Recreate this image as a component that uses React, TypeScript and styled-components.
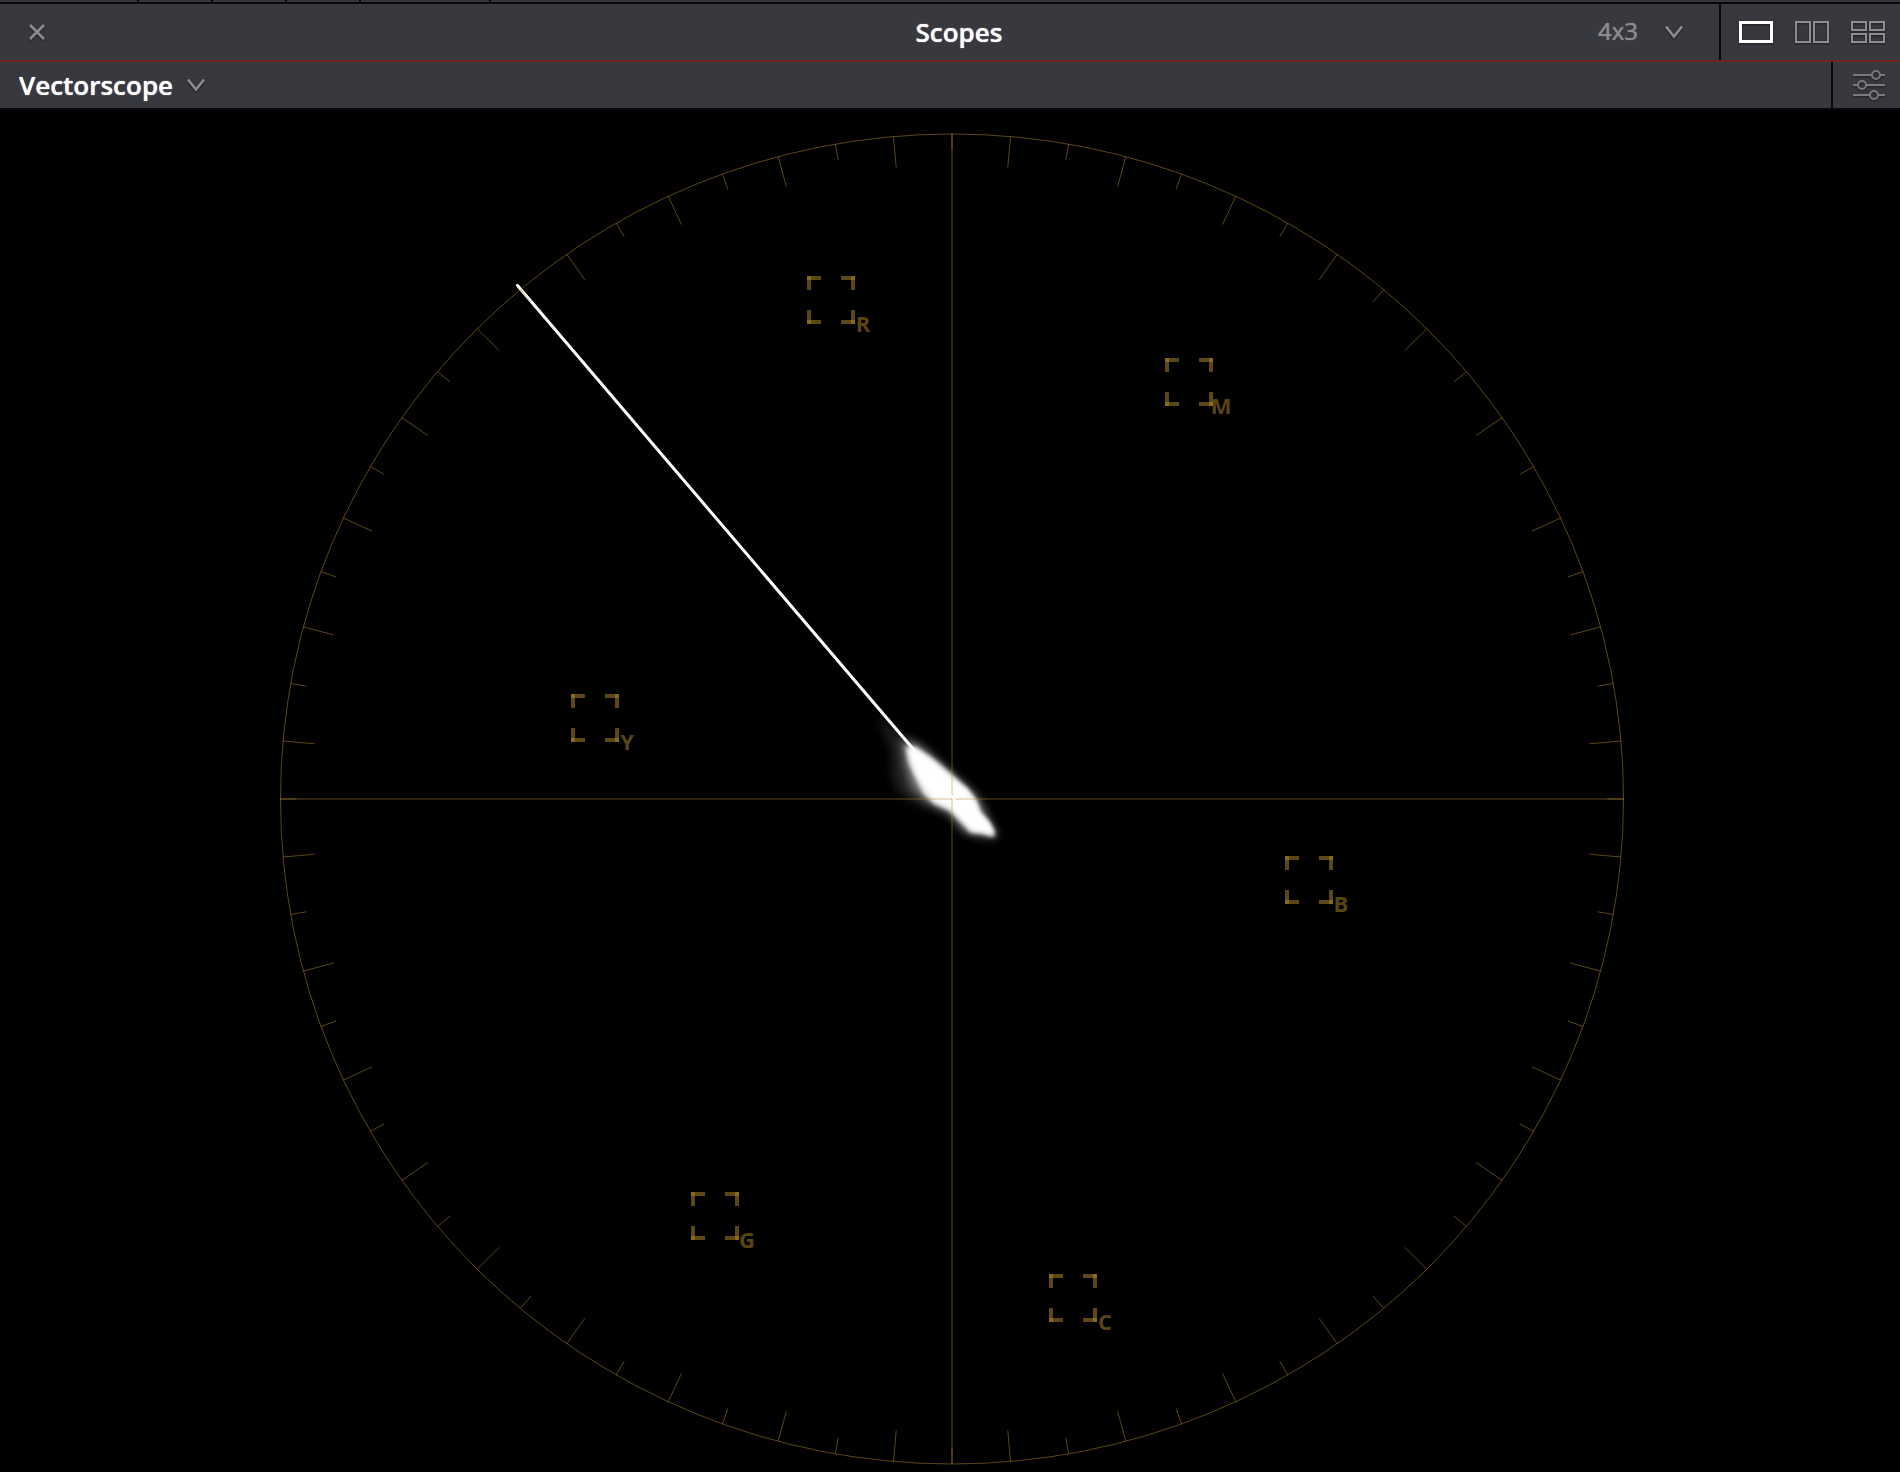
import React from "react";
import styled, { createGlobalStyle } from "styled-components";

const GlobalStyle = createGlobalStyle`
  *, *::before, *::after { box-sizing: border-box; }
  html { background: #000; }
  body {
    margin: 0;
    background: #000;
    font-family: "Open Sans", "Noto Sans", sans-serif;
    color: #fff;
  }
`;

const GOLD = "#b1882a";
const EDGE = "#08090c";
const PANEL = "#38393e";
const MUTED = "#8e8d8e";

const Page = styled.main`
  min-height: 100vh;
  display: flex;
  flex-direction: column;
  background: #000;
`;

const TabEdge = styled.div`
  display: grid;
  grid-template-columns: 137px 72px 72px 72px 128px 1fr;
  column-gap: 2px;
  height: 4px;
  background: ${EDGE};
  border-bottom: 2px solid ${EDGE};
`;

const TabStub = styled.span`
  background: #34353c;
`;

const Header = styled.header`
  display: grid;
  grid-template-columns: 1fr auto 1fr;
  height: 58px;
  background: ${PANEL};
  border-bottom: 2px solid #702723;
`;

const Side = styled.div<{ $end?: boolean }>`
  display: flex;
  align-items: stretch;
  justify-content: ${(p) => (p.$end ? "flex-end" : "flex-start")};
`;

const Title = styled.h1`
  margin: 0;
  padding-left: 18px;
  align-self: center;
  font-size: 26px;
  line-height: 36px;
  font-weight: 600;
  text-shadow: 0 0 1px currentColor;
`;

const SubBar = styled.div`
  display: flex;
  justify-content: space-between;
  height: 48px;
  background: ${PANEL};
  border-bottom: 2px solid ${EDGE};
`;

const IconButton = styled.button<{ $dim?: boolean }>`
  display: flex;
  align-items: center;
  padding: 0;
  border: 0;
  background: none;
  color: ${(p) => (p.$dim ? "#7a7a7b" : MUTED)};
  cursor: pointer;
  svg {
    display: block;
    filter: drop-shadow(0 1px 1px rgba(0, 0, 0, 0.5));
  }
  &[aria-pressed="true"] { color: #fff; }
`;

const CloseButton = styled(IconButton)`
  padding: 0 28px;
`;

const ButtonGroup = styled.div`
  display: flex;
  gap: 22px;
  padding: 0 15px 0 18px;
  border-left: 2px solid ${EDGE};
`;

const Picker = styled.label<{ $quiet?: boolean }>`
  display: flex;
  align-items: center;
  gap: ${(p) => (p.$quiet ? "25px" : "12px")};
  padding: ${(p) => (p.$quiet ? "0 35px 0 0" : "0 0 0 19px")};
  color: ${MUTED};
  svg {
    display: block;
    pointer-events: none;
    filter: drop-shadow(0 1px 1px rgba(0, 0, 0, 0.5));
  }
`;

const Select = styled.select<{ $quiet?: boolean }>`
  appearance: none;
  margin: 0;
  padding: ${(p) => (p.$quiet ? "0 0 2px" : "0")};
  border: 0;
  background: transparent;
  font-family: inherit;
  font-size: ${(p) => (p.$quiet ? "24px" : "26px")};
  line-height: 36px;
  font-weight: ${(p) => (p.$quiet ? 400 : 600)};
  color: ${(p) => (p.$quiet ? MUTED : "#fff")};
  text-shadow: 0 0 1px currentColor;
  cursor: pointer;
`;

const Plot = styled.svg`
  display: block;
  width: 100%;
  height: auto;
`;

const TargetLabel = styled.text`
  font-size: 22px;
  font-weight: 700;
  text-anchor: middle;
  fill: ${GOLD};
  fill-opacity: 0.52;
`;

const Chevron = () => (
  <svg width="20" height="14" viewBox="0 0 20 14" fill="none" stroke="currentColor" strokeWidth="2.6" aria-hidden="true">
    <path d="M2 1.5L10 11.5L18 1.5" />
  </svg>
);

const CX = 952;
const CY = 689;
const RX = 671.5;
const RY = 665;

const ticks = Array.from({ length: 72 }, (_, i) => {
  const a = (i * 5 * Math.PI) / 180;
  const inner = i % 2 ? 0.953 : 0.976;
  const c = Math.cos(a);
  const s = Math.sin(a);
  return { x1: CX + RX * c, y1: CY + RY * s, x2: CX + RX * inner * c, y2: CY + RY * inner * s };
});

const targets = [
  { name: "R", x: 807, y: 166 },
  { name: "M", x: 1165, y: 248 },
  { name: "Y", x: 571, y: 584 },
  { name: "B", x: 1285, y: 746 },
  { name: "G", x: 691, y: 1082 },
  { name: "C", x: 1049, y: 1164 },
];

const HORIZONTAL_LEGS = "M0 2H14M34 2H48M0 46H14M34 46H48";
const VERTICAL_LEGS = "M2 0V14M46 0V14M2 34V48M46 34V48";

const Target = ({ name, x, y }: { name: string; x: number; y: number }) => (
  <g>
    <g transform={`translate(${x} ${y})`} fill="none" stroke={GOLD} strokeOpacity="0.52" strokeWidth="4">
      <path d={HORIZONTAL_LEGS} />
      <path d={VERTICAL_LEGS} />
    </g>
    <TargetLabel x={x + 56} y={y + 56}>{name}</TargetLabel>
  </g>
);

const Vectorscope = () => (
  <Plot viewBox="0 0 1900 1362" role="img" aria-label="Vectorscope">
    <defs>
      <filter id="core" x="-20%" y="-20%" width="140%" height="140%">
        <feGaussianBlur stdDeviation="7" />
      </filter>
      <filter id="glow" x="-30%" y="-30%" width="160%" height="160%">
        <feGaussianBlur stdDeviation="15" />
      </filter>
    </defs>
    <g transform="translate(860 590) scale(0.3333)" fill="#fff">
      <path
        filter="url(#glow)"
        opacity="0.12"
        d="M50 50L120 105L190 140L270 215L350 280L380 340L345 405L310 395L260 345L180 315L115 280L95 220L95 150Z"
      />
      <path
        filter="url(#glow)"
        opacity="0.42"
        d="M125 118L175 132L270 215L350 290L412 405L405 415L340 405L310 392L270 340L195 300L155 265L135 195Z"
      />
      <path
        filter="url(#core)"
        opacity="0.8"
        d="M136 138L165 140L215 172L275 222L325 268L350 302L362 338L388 366L406 398L400 412L370 403L332 398L298 362L268 332L222 312L190 282L165 232L145 188Z"
      />
      <path
        filter="url(#core)"
        d="M146 148L168 148L215 182L270 230L320 270L345 303L357 335L385 366L398 392L394 402L370 395L335 388L302 354L272 324L226 304L198 270L168 218Z"
      />
    </g>
    <path d="M517.5 175.5L914 640" stroke="#fff" strokeWidth="3" strokeLinecap="round" />
    <g fill="none" stroke={GOLD} strokeOpacity="0.52">
      <path d="M280 689H1624" />
      <path d="M952 24V1354" />
      <ellipse cx={CX} cy={CY} rx={RX} ry={RY} />
      {ticks.map((t, i) => (
        <line key={i} {...t} />
      ))}
    </g>
    <path d="M950.5 685L955.5 691" stroke="#fff" strokeWidth="2.5" />
    {targets.map((t) => (
      <Target key={t.name} {...t} />
    ))}
  </Plot>
);

export default function App() {
  return (
    <Page>
      <GlobalStyle />
      <TabEdge aria-hidden="true">
        {[0, 1, 2, 3, 4, 5].map((n) => (
          <TabStub key={n} />
        ))}
      </TabEdge>
      <Header>
        <Side>
          <CloseButton type="button" aria-label="Close">
            <svg width="18" height="18" viewBox="0 0 18 18" fill="none" stroke="currentColor" strokeWidth="2.6" aria-hidden="true">
              <path d="M2 2L16 16M16 2L2 16" />
            </svg>
          </CloseButton>
        </Side>
        <Title>Scopes</Title>
        <Side $end>
          <Picker $quiet>
            <Select $quiet aria-label="Grid size" defaultValue="4x3">
              <option>4x3</option>
            </Select>
            <Chevron />
          </Picker>
          <ButtonGroup>
            <IconButton type="button" aria-label="Single view" aria-pressed="true">
              <svg width="34" height="22" viewBox="0 0 34 22" fill="none" stroke="currentColor" strokeWidth="3" aria-hidden="true">
                <rect x="1.5" y="1.5" width="31" height="19" />
              </svg>
            </IconButton>
            <IconButton type="button" aria-label="Two views" aria-pressed="false">
              <svg width="34" height="22" viewBox="0 0 34 22" fill="none" stroke="currentColor" strokeWidth="2" aria-hidden="true">
                <rect x="1" y="1" width="14" height="20" />
                <rect x="19" y="1" width="14" height="20" />
              </svg>
            </IconButton>
            <IconButton type="button" aria-label="Four views" aria-pressed="false">
              <svg width="34" height="22" viewBox="0 0 34 22" fill="none" stroke="currentColor" strokeWidth="2" aria-hidden="true">
                <rect x="1" y="1" width="14" height="8" />
                <rect x="19" y="1" width="14" height="8" />
                <rect x="1" y="13" width="14" height="8" />
                <rect x="19" y="13" width="14" height="8" />
              </svg>
            </IconButton>
          </ButtonGroup>
        </Side>
      </Header>
      <SubBar>
        <Picker>
          <Select aria-label="Scope type" defaultValue="Vectorscope">
            <option>Vectorscope</option>
          </Select>
          <Chevron />
        </Picker>
        <ButtonGroup>
          <IconButton $dim type="button" aria-label="Scope settings">
            <svg width="34" height="30" viewBox="0 0 34 30" fill="none" stroke="currentColor" strokeWidth="2" aria-hidden="true">
              <path d="M2 5H21M29 5H34M2 15H7M15 15H34M2 25H19M27 25H34" />
              <circle cx="25" cy="5" r="4" />
              <circle cx="11" cy="15" r="4" />
              <circle cx="23" cy="25" r="4" />
            </svg>
          </IconButton>
        </ButtonGroup>
      </SubBar>
      <Vectorscope />
    </Page>
  );
}
